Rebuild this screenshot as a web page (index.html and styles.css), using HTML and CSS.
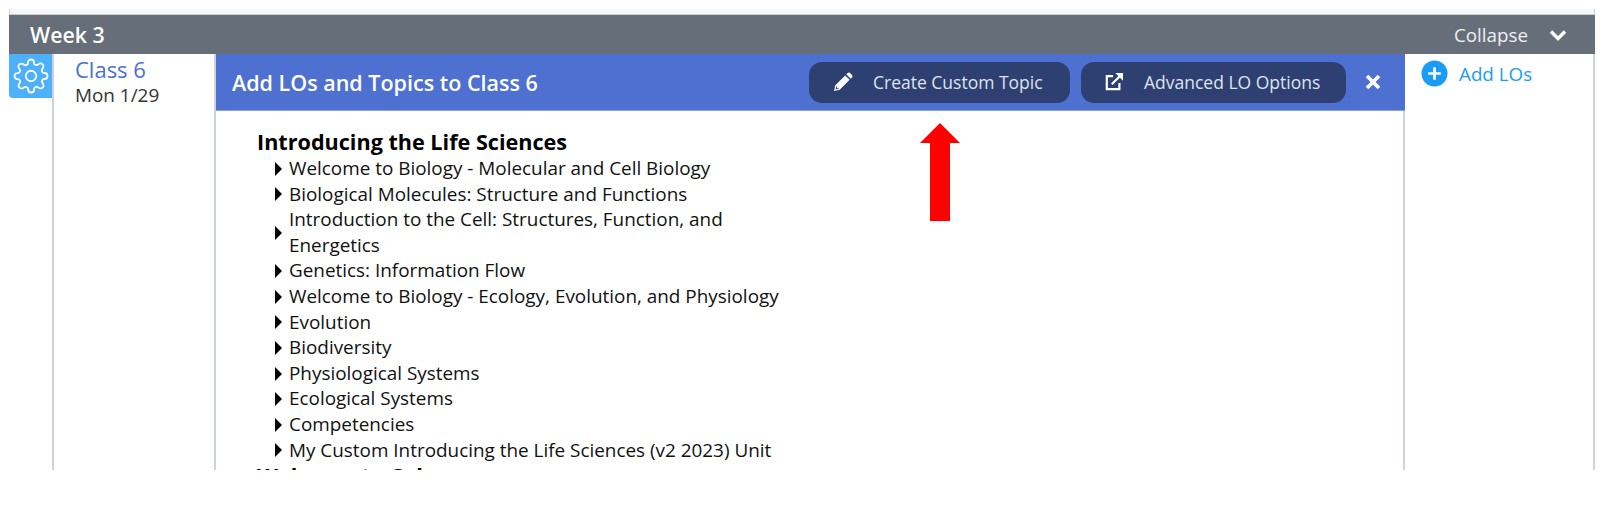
FILE: index.html
```html
<!DOCTYPE html>
<html lang="en">
<head>
<meta charset="utf-8">
<title>Add LOs and Topics</title>
<link rel="stylesheet" href="styles.css">
</head>
<body>
<div class="planner">
  <div class="top-strip"></div>
  <div class="week-bar">
    <span class="week-title">Week 3</span>
    <span class="collapse">Collapse
      <svg class="chevron" viewBox="0 0 18 12" width="18" height="12"><path d="M2 2.5 9 9.5 16 2.5" fill="none" stroke="#fff" stroke-width="3.4"/></svg>
    </span>
  </div>
  <div class="row">
    <div class="gear-col">
      <div class="gear-tab">
        <svg viewBox="0 0 24 24" width="36" height="36" fill="none" stroke="#fff" stroke-width="1.200" stroke-linejoin="round"><circle cx="12" cy="12" r="3.500"/><path d="M19.4 15a1.65 1.65 0 0 0 .33 1.82l.06.06a2 2 0 0 1 0 2.83 2 2 0 0 1-2.83 0l-.06-.06a1.65 1.65 0 0 0-1.82-.33 1.65 1.65 0 0 0-1 1.51V21a2 2 0 0 1-2 2 2 2 0 0 1-2-2v-.09A1.65 1.65 0 0 0 9 19.4a1.65 1.65 0 0 0-1.82.33l-.06.06a2 2 0 0 1-2.83 0 2 2 0 0 1 0-2.83l.06-.06a1.65 1.65 0 0 0 .33-1.82 1.65 1.65 0 0 0-1.51-1H3a2 2 0 0 1-2-2 2 2 0 0 1 2-2h.09A1.65 1.65 0 0 0 4.6 9a1.65 1.65 0 0 0-.33-1.82l-.06-.06a2 2 0 0 1 0-2.83 2 2 0 0 1 2.83 0l.06.06a1.65 1.65 0 0 0 1.82.33H9a1.65 1.65 0 0 0 1-1.51V3a2 2 0 0 1 2-2 2 2 0 0 1 2 2v.09a1.65 1.65 0 0 0 1 1.51 1.65 1.65 0 0 0 1.82-.33l.06-.06a2 2 0 0 1 2.83 0 2 2 0 0 1 0 2.83l-.06.06a1.65 1.65 0 0 0-.33 1.82V9a1.65 1.65 0 0 0 1.51 1H21a2 2 0 0 1 2 2 2 2 0 0 1-2 2h-.09a1.65 1.65 0 0 0-1.51 1z"/></svg>
      </div>
    </div>
    <div class="class-col">
      <div class="class-name">Class 6</div>
      <div class="class-date">Mon 1/29</div>
    </div>
    <div class="panel">
      <div class="panel-head">
        <span class="panel-title">Add LOs and Topics to Class 6</span>
        <div class="panel-actions">
          <button class="btn btn-topic">
            <svg viewBox="0 0 20 20" width="20" height="20"><path fill="#fff" d="M1 19l1.300-5.700 9.900-9.900 4.400 4.400-9.900 9.900zM3.300 14.200l-.7 3.200 3.200-.7-.6-.6-1.300.3.200-1.300z"/><path fill="#fff" d="M13.300 2.300l1.300-1.200a1.800 1.800 0 0 1 2.500 0l1.800 1.800a1.800 1.800 0 0 1 0 2.500l-1.200 1.300z"/></svg>
            <span>Create Custom Topic</span>
          </button>
          <button class="btn btn-lo">
            <svg viewBox="0 0 20 20" width="18" height="18" fill="none" stroke="#fff" stroke-width="2.400"><path d="M9 3.500H2v14.500h14v-7"/><path d="M7.500 12.500 17 3"/><path fill="#fff" stroke="none" d="M11.500 0H20v8.500z"/></svg>
            <span>Advanced LO Options</span>
          </button>
          <svg class="close" viewBox="0 0 16 16" width="16" height="16"><path d="M2 2 14 14M14 2 2 14" stroke="#fff" stroke-width="3.600"/></svg>
        </div>
      </div>
      <div class="panel-body">
        <h3 class="unit">Introducing the Life Sciences</h3>
        <ul class="topics">
          <li>Welcome to Biology - Molecular and Cell Biology</li>
          <li>Biological Molecules: Structure and Functions</li>
          <li>Introduction to the Cell: Structures, Function, and Energetics</li>
          <li>Genetics: Information Flow</li>
          <li>Welcome to Biology - Ecology, Evolution, and Physiology</li>
          <li>Evolution</li>
          <li>Biodiversity</li>
          <li>Physiological Systems</li>
          <li>Ecological Systems</li>
          <li>Competencies</li>
          <li>My Custom Introducing the Life Sciences (v2 2023) Unit</li>
        </ul>
        <h3 class="unit unit-next">Welcome to Cel</h3>
      </div>
    </div>
    <div class="los-col">
      <svg viewBox="0 0 28 28" width="27" height="27"><circle cx="14" cy="14" r="13.500" fill="#1a9bf5"/><path d="M14 7.500v13M7.500 14h13" stroke="#fff" stroke-width="2.800"/></svg>
      <span class="add-los">Add LOs</span>
    </div>
  </div>
  <svg class="arrow" viewBox="0 0 40 98" width="40" height="98"><path fill="#ff0000" d="M20 0 40 20H30V98H10V20H0z"/></svg>
</div>
</body>
</html>
```
FILE: styles.css
```css
* { box-sizing: border-box; }
html, body { margin: 0; background: #fff; }
body { height: 515px; overflow: hidden; padding: 9px 5px 0 9px; font-family: "Open Sans", sans-serif; }
.planner { position: relative; height: 461px; overflow: hidden; }
.top-strip { height: 5px; background: #f6f6f7; border-left: 1px solid #d4d6da; border-right: 1px solid #d4d6da; }
.week-bar { height: 40px; background: #656e79; color: #fff; display: flex; align-items: center; justify-content: space-between; padding: 0 28px 0 21px; border-top: 1px solid #c9ccd1; }
.week-title { font-size: 21.300px; font-weight: 600; }
.collapse { font-size: 18.800px; color: #eef0f2; display: flex; align-items: center; gap: 21px; }
.row { display: flex; height: 416px; background: #fff; }
.gear-col { width: 43px; flex: none; }
.gear-tab { width: 43px; height: 44px; background: #4cb0fb; border-bottom-left-radius: 4px; display: flex; align-items: center; justify-content: center; }
.class-col { width: 162px; flex: none; border-left: 2px solid #cfd2dd; padding: 0 0 0 21px; }
.class-name { font-size: 22px; line-height: 30px; color: #4b70d1; }
.class-date { font-size: 18.900px; line-height: 20px; margin-top: 1px; color: #333; }
.panel { width: 1191px; flex: none; border-left: 2px solid #cfd2dd; border-right: 2px solid #cfd2dd; }
.panel-head { height: 57px; margin: 0 -2px 0 0; background: #4d70d1; display: flex; align-items: center; justify-content: space-between; padding: 0 24px 0 16px; border-bottom: 1px solid #8aa0e0; }
.panel-title { color: #fff; font-size: 21.500px; font-weight: 600; }
.panel-actions { display: flex; align-items: center; }
.btn { height: 41px; border: 0; border-radius: 13px; background: #2e4071; color: #dfe3ee; font-family: inherit; font-size: 17.500px; display: flex; align-items: center; padding: 0 0 0 24px; }
.btn-topic { width: 261px; gap: 20px; margin-right: 11px; }
.btn-lo { width: 265px; gap: 21px; margin-right: 19px; }
.panel-body { padding: 17px 0 0 41px; }
.unit { margin: 0; font-size: 21.600px; font-weight: 700; line-height: 28px; color: #000; }
.unit-next { line-height: 25px; }
.topics { list-style: none; margin: 0; padding: 0 0 0 32px; width: 527px; }
.topics li { position: relative; font-size: 18.900px; line-height: 25.600px; color: #111; }
.topics li::before { content: ""; position: absolute; left: -14px; top: 50%; margin-top: -7px; border-left: 7px solid #000; border-top: 7px solid transparent; border-bottom: 7px solid transparent; }
.los-col { flex: 1; border-right: 2px solid #cfd2dd; display: flex; align-items: flex-start; gap: 11px; padding: 6px 0 0 16px; }
.add-los { font-size: 18.800px; line-height: 27px; padding-top: 1px; color: #1a9bf5; }
.arrow { position: absolute; left: 911px; top: 114px; }
```
